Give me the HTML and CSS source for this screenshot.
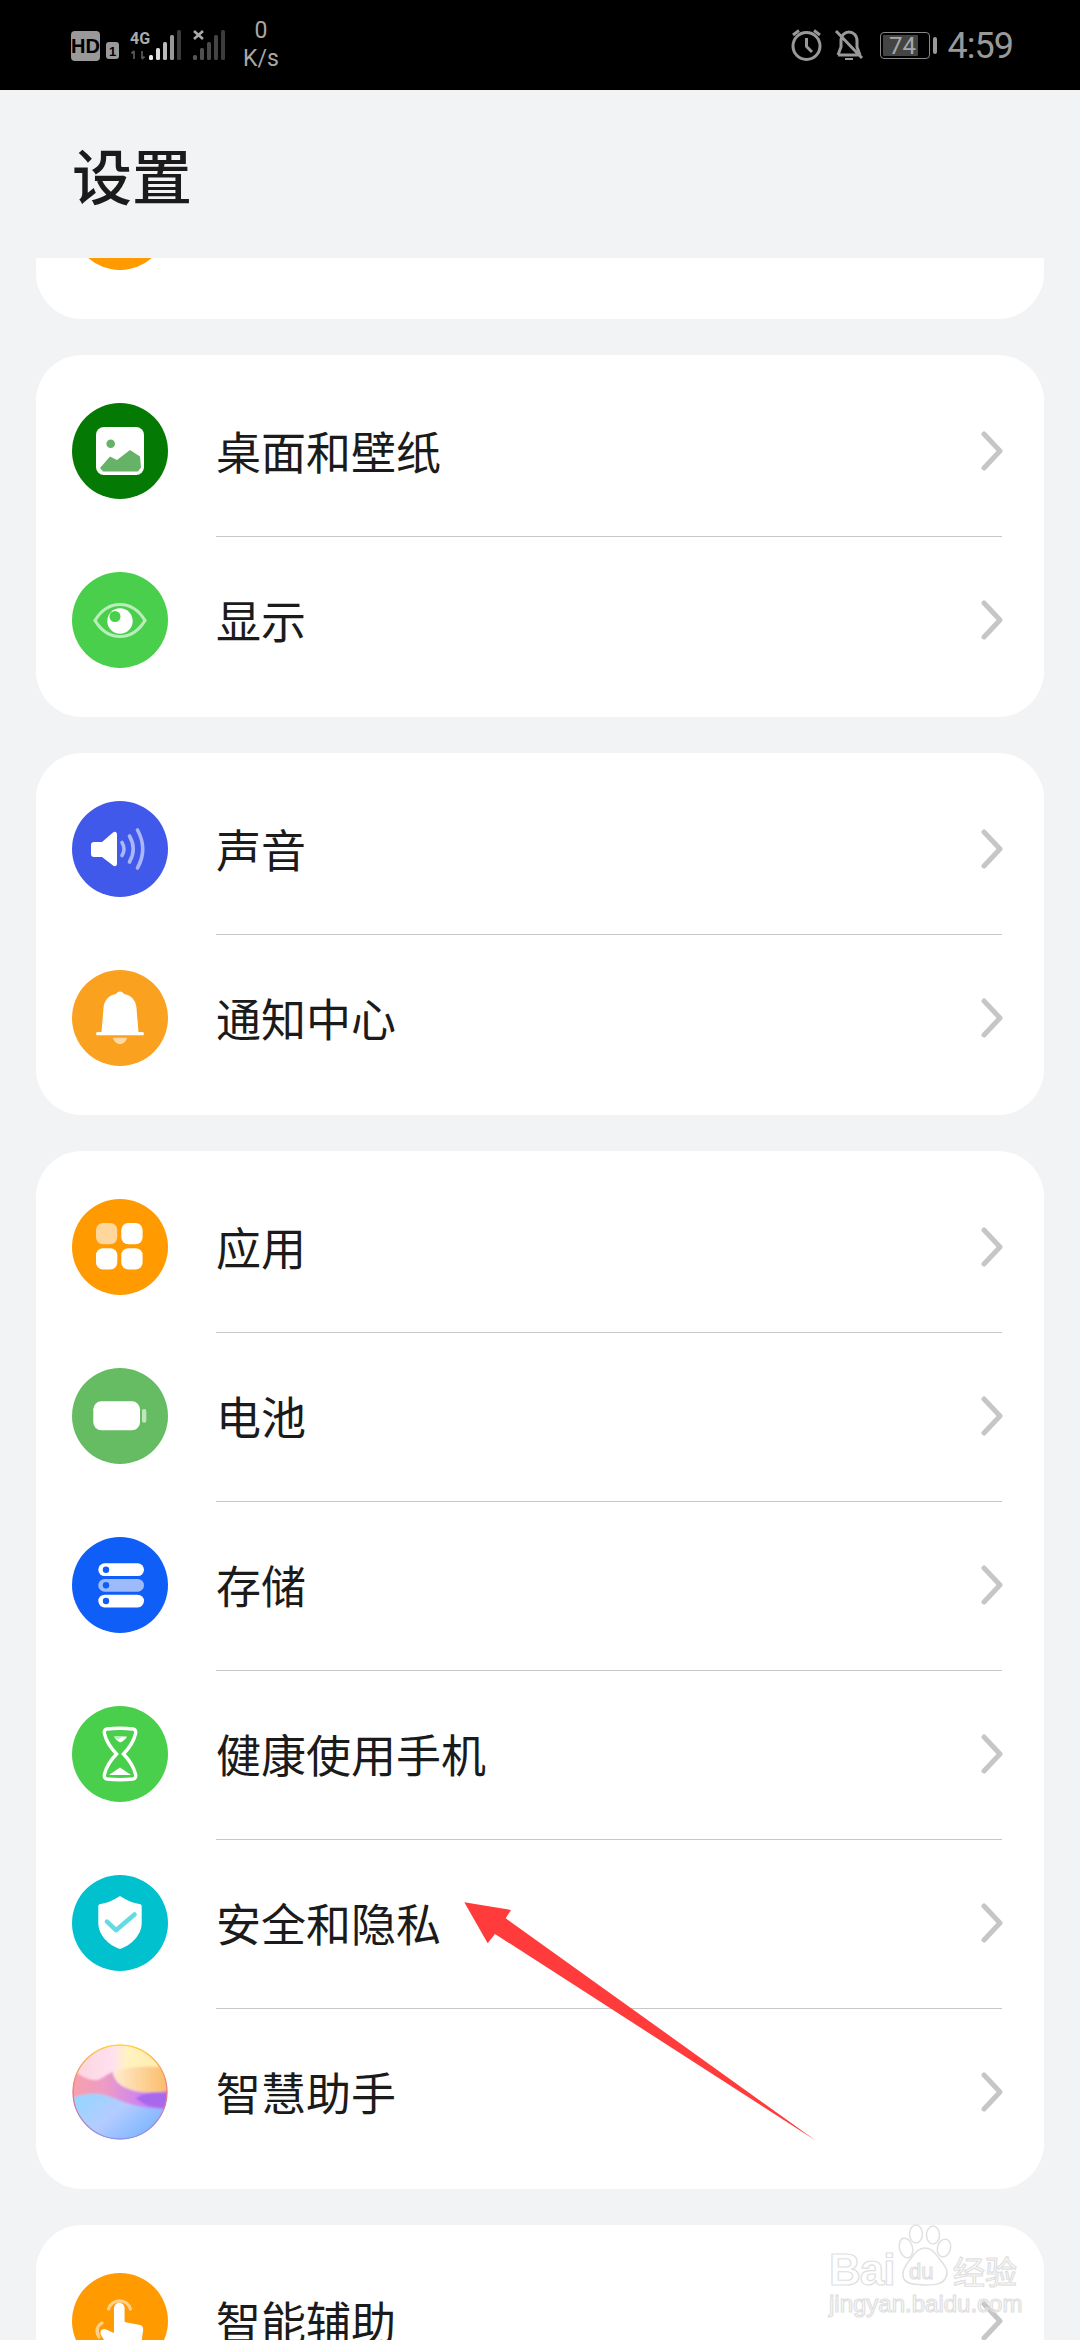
FILE: index.html
```html
<!DOCTYPE html>
<html lang="zh-CN">
<head>
<meta charset="utf-8">
<title>设置</title>
<link rel="stylesheet" href="styles.css">
</head>
<body>
<div class="page">
  <header class="status">
    <div class="status-left">
      <svg class="net" width="152" height="40" viewBox="71 26 152 40">
        <rect x="71" y="31" width="29" height="30" rx="4" fill="#999"/>
        <text x="85.5" y="53" class="st-hd">HD</text>
        <rect x="106" y="42" width="13" height="17" rx="3" fill="#999"/>
        <text x="112.5" y="56" class="st-one">1</text>
        <text x="140" y="44" class="st-4g">4G</text>
        <path d="M134 59v-8M131.5 53.5l2.5-2.5M142 51v8M144.5 56.5L142 59" stroke="#555" stroke-width="1.8" fill="none"/>
        <rect x="149" y="55" width="4" height="5" rx="1.5" fill="#eee"/>
        <rect x="156" y="48" width="4" height="12" rx="1.5" fill="#ddd"/>
        <rect x="163" y="42" width="4" height="18" rx="1.5" fill="#bbb"/>
        <rect x="170" y="35" width="4" height="25" rx="1.5" fill="#999"/>
        <rect x="177" y="30" width="4" height="30" rx="1.5" fill="#3c3c3c"/>
        <path d="M194 31l9 8M203 31l-9 8" stroke="#aaa" stroke-width="2.6"/>
        <rect x="193" y="55" width="4" height="5" rx="1.5" fill="#555"/>
        <rect x="200" y="48" width="4" height="12" rx="1.5" fill="#505050"/>
        <rect x="207" y="42" width="4" height="18" rx="1.5" fill="#4a4a4a"/>
        <rect x="214" y="35" width="4" height="25" rx="1.5" fill="#444"/>
        <rect x="221" y="30" width="4" height="30" rx="1.5" fill="#3c3c3c"/>
      </svg>
      <div class="speed"><span>0</span><span>K/s</span></div>
    </div>
    <div class="status-right">
      <svg class="alarm" width="32" height="34" viewBox="791 28 32 34" fill="none" stroke="#999" stroke-width="3">
        <circle cx="806.5" cy="46" r="13.5"/>
        <path d="M806.5 38v8.500l5.500 5.500M793 35l6-4.500M820 35l-6-4.500"/>
      </svg>
      <svg class="mute" width="30" height="34" viewBox="834 28 30 34" fill="none" stroke="#999" stroke-width="3">
        <path d="M838 55h22M841 41c0-6 4-9 8-9s8 3 8 9v6l3 8M841 41v6l-3 8M836 31l26 27"/>
        <path d="M845 59h8" stroke-width="2"/>
      </svg>
      <div class="battery"><span class="battery-fill"></span><span class="battery-num">74</span></div>
      <span class="battery-tab"></span>
      <span class="clock">4:59</span>
    </div>
  </header>

  <h1 class="title">设置</h1>

  <main class="scroller">
    <div class="list">
      <section class="card">
        <div class="row">
          <span class="icon c-orange"></span>
          <span class="label">更多连接</span>
          <svg class="chev" width="22" height="40" viewBox="0 0 22 40"><path d="M3 3l16 17L3 37"/></svg>
        </div>
      </section>

      <section class="card">
        <div class="row">
          <span class="icon c-darkgreen">
            <svg width="96" height="96" viewBox="0 0 96 96">
              <rect x="24" y="24" width="48" height="48" rx="8" fill="#fff"/>
              <circle cx="38.700" cy="40.700" r="4.300" fill="#66b266"/>
              <path d="M28 65l10-11.500 7 3.500 13-10 10 6.500 1 11-3 4H31z" fill="#66b266"/>
            </svg>
          </span>
          <span class="label">桌面和壁纸</span>
          <svg class="chev" width="22" height="40" viewBox="0 0 22 40"><path d="M3 3l16 17L3 37"/></svg>
        </div>
        <div class="row">
          <span class="icon c-green">
            <svg width="96" height="96" viewBox="0 0 96 96">
              <path d="M23 48.500C30 37 39 32.500 48 32.500S66 37 73 48.500C66 60 57 64.500 48 64.500S30 60 23 48.500z" fill="none" stroke="#b9edb9" stroke-width="3.200"/>
              <circle cx="48" cy="49" r="12.700" fill="#fff"/>
              <circle cx="43" cy="44.500" r="5.500" fill="#49cf4b"/>
            </svg>
          </span>
          <span class="label">显示</span>
          <svg class="chev" width="22" height="40" viewBox="0 0 22 40"><path d="M3 3l16 17L3 37"/></svg>
        </div>
      </section>

      <section class="card">
        <div class="row">
          <span class="icon c-indigo">
            <svg width="96" height="96" viewBox="0 0 96 96">
              <path d="M22 41h8l11-9.500c2-1.500 4-.5 4 2v29c0 2.500-2 3.500-4 2L30 56h-8c-2 0-3-1-3-3V44c0-2 1-3 3-3z" fill="#fff"/>
              <path d="M50 41.500q4 6.500 0 13M57.500 35q7.500 13 0 26M65.500 29q10.500 19 0 38" fill="none" stroke="#aab6f6" stroke-width="3.600" stroke-linecap="round"/>
            </svg>
          </span>
          <span class="label">声音</span>
          <svg class="chev" width="22" height="40" viewBox="0 0 22 40"><path d="M3 3l16 17L3 37"/></svg>
        </div>
        <div class="row">
          <span class="icon c-amber">
            <svg width="96" height="96" viewBox="0 0 96 96">
              <path d="M48 21.500c2 0 3 1 4 2.500 8 1.500 12 7 12.500 14L66.500 62h3.900c2 0 2 3.300 0 3.300H25.600c-2 0-2-3.300 0-3.300h3.900l2-24c.5-7 4.500-12.500 12.500-14 1-1.500 2-2.500 4-2.500z" fill="#fff"/>
              <path d="M41 67.700h14c-1 4-4 6.300-7 6.300s-6-2.300-7-6.300z" fill="#fdd9a5"/>
            </svg>
          </span>
          <span class="label">通知中心</span>
          <svg class="chev" width="22" height="40" viewBox="0 0 22 40"><path d="M3 3l16 17L3 37"/></svg>
        </div>
      </section>

      <section class="card">
        <div class="row">
          <span class="icon c-orange">
            <svg width="96" height="96" viewBox="0 0 96 96">
              <rect x="24" y="24" width="21.300" height="21.300" rx="7" fill="#ffd69c"/>
              <rect x="49.300" y="24" width="21.300" height="21.300" rx="7" fill="#fff"/>
              <rect x="24" y="49.300" width="21.300" height="21.300" rx="7" fill="#fff"/>
              <rect x="49.300" y="49.300" width="21.300" height="21.300" rx="7" fill="#fff"/>
            </svg>
          </span>
          <span class="label">应用</span>
          <svg class="chev" width="22" height="40" viewBox="0 0 22 40"><path d="M3 3l16 17L3 37"/></svg>
        </div>
        <div class="row">
          <span class="icon c-leaf">
            <svg width="96" height="96" viewBox="0 0 96 96">
              <rect x="21.300" y="33.300" width="46.700" height="29" rx="8" fill="#fff"/>
              <rect x="70" y="41" width="4.300" height="13.700" rx="2" fill="#c2e4c0"/>
            </svg>
          </span>
          <span class="label">电池</span>
          <svg class="chev" width="22" height="40" viewBox="0 0 22 40"><path d="M3 3l16 17L3 37"/></svg>
        </div>
        <div class="row">
          <span class="icon c-blue">
            <svg width="96" height="96" viewBox="0 0 96 96">
              <rect x="26.300" y="26.300" width="45.700" height="12.700" rx="6.300" fill="#fff"/>
              <rect x="26.300" y="42" width="45.700" height="12.700" rx="6.300" fill="#9dbafb"/>
              <rect x="26.300" y="57.700" width="45.700" height="12.700" rx="6.300" fill="#fff"/>
              <circle cx="34" cy="32.700" r="3.200" fill="#0f5ef7"/>
              <circle cx="34" cy="48.300" r="3.200" fill="#0f5ef7"/>
              <circle cx="34" cy="64" r="3.200" fill="#0f5ef7"/>
            </svg>
          </span>
          <span class="label">存储</span>
          <svg class="chev" width="22" height="40" viewBox="0 0 22 40"><path d="M3 3l16 17L3 37"/></svg>
        </div>
        <div class="row">
          <span class="icon c-green">
            <svg width="96" height="96" viewBox="0 0 96 96">
              <path d="M35 23Q48 21.500 61 23Q64.500 23.500 63.500 28Q61 38 51.500 48Q61 58 63.500 68Q64.500 72.500 61 73Q48 74.500 35 73Q31.500 72.500 32.500 68Q35 58 44.500 48Q35 38 32.500 28Q31.500 23.500 35 23z" fill="none" stroke="#fff" stroke-width="3.400"/>
              <path d="M42 30.500h13q-2 4-7 6q-4-2-6-6z" fill="#fff"/>
              <path d="M42 30.500h9l-5 3z" fill="#b9edb9"/>
              <path d="M48 61.500l11 7.500H37z" fill="#fff"/>
            </svg>
          </span>
          <span class="label">健康使用手机</span>
          <svg class="chev" width="22" height="40" viewBox="0 0 22 40"><path d="M3 3l16 17L3 37"/></svg>
        </div>
        <div class="row">
          <span class="icon c-teal">
            <svg width="96" height="96" viewBox="0 0 96 96">
              <path d="M48 21c6 4 13 7 19.500 8c1.500.3 2.200 1 2.200 2.500V48C69.700 60 59 70.500 48 74C37 70.500 26.300 60 26.300 48V31.500c0-1.500.7-2.200 2.200-2.500C35 28 42 25 48 21z" fill="#fff"/>
              <path d="M35 46.700l9 8.500 18.500-15.700" fill="none" stroke="#62dbe2" stroke-width="4.600" stroke-linecap="round" stroke-linejoin="round"/>
            </svg>
          </span>
          <span class="label">安全和隐私</span>
          <svg class="chev" width="22" height="40" viewBox="0 0 22 40"><path d="M3 3l16 17L3 37"/></svg>
        </div>
        <div class="row">
          <span class="icon">
            <svg width="96" height="96" viewBox="0 0 96 96">
              <defs>
                <clipPath id="orb"><circle cx="48" cy="48" r="47"/></clipPath>
                <filter id="soft" x="-10%" y="-10%" width="120%" height="120%"><feGaussianBlur stdDeviation="1.200"/></filter>
                <linearGradient id="orbTop" x1="0" y1="0" x2="1" y2="0">
                  <stop offset="0" stop-color="#fbd3dc"/><stop offset=".42" stop-color="#ffe0f0"/><stop offset=".58" stop-color="#fff3c0"/><stop offset="1" stop-color="#ffe9a8"/>
                </linearGradient>
                <linearGradient id="orbMid" x1="0" y1="0" x2="1" y2="0">
                  <stop offset="0" stop-color="#f8a0a8"/><stop offset=".35" stop-color="#ee9cc4"/><stop offset=".8" stop-color="#c47cff"/><stop offset="1" stop-color="#e46fa8"/>
                </linearGradient>
                <linearGradient id="orbLow" x1="0" y1="0" x2="1" y2=".6">
                  <stop offset="0" stop-color="#8fd8ff"/><stop offset=".5" stop-color="#b4ccff"/><stop offset="1" stop-color="#72b2ff"/>
                </linearGradient>
                <linearGradient id="orbSun" x1="0" y1="0" x2="1" y2="0">
                  <stop offset="0" stop-color="#ffeccf"/><stop offset="1" stop-color="#fbb860"/>
                </linearGradient>
                <linearGradient id="orbRim" x1="0" y1="0" x2="0" y2="1">
                  <stop offset="0" stop-color="#ffd23c"/><stop offset=".5" stop-color="#e8768c"/><stop offset="1" stop-color="#8f94e8"/>
                </linearGradient>
              </defs>
              <g clip-path="url(#orb)">
                <rect width="96" height="96" fill="url(#orbTop)"/>
                <g filter="url(#soft)">
                  <path d="M-4 22c12 10 20 15 29 14c6-1 9-6 16-8c0 0 1 12 14 16h45v56H-4z" fill="url(#orbMid)"/>
                  <path d="M41 30c8-6 20-9 59-6v22c-19 4-49 6-59-16z" fill="url(#orbSun)"/>
                  <path d="M64 54c10-6 22-7 36-4v14c-16 1-28-2-36-10z" fill="#a868ec"/>
                  <path d="M-4 56c16-8 31-8 46-2c12 5 24 11 58 11v35H-4z" fill="url(#orbLow)"/>
                </g>
              </g>
              <circle cx="48" cy="48" r="47" fill="none" stroke="url(#orbRim)" stroke-width="1.400"/>
            </svg>
          </span>
          <span class="label">智慧助手</span>
          <svg class="chev" width="22" height="40" viewBox="0 0 22 40"><path d="M3 3l16 17L3 37"/></svg>
        </div>
      </section>

      <section class="card">
        <div class="row">
          <span class="icon c-orange">
            <svg width="96" height="96" viewBox="0 0 96 96">
              <path d="M36.500 36a11.500 11.500 0 0 1 22 0" fill="none" stroke="#ffd08a" stroke-width="3.200" stroke-linecap="round"/>
              <path d="M27 64q-5-9 3-14" fill="none" stroke="#ffd08a" stroke-width="3.200" stroke-linecap="round"/>
              <path d="M42 35a5.300 5.300 0 0 1 10.600 0V49L68 52q4 1 3 6L68 80H40L29 62q-2-6 4-6l9 4z" fill="#fff"/>
            </svg>
          </span>
          <span class="label">智能辅助</span>
          <svg class="chev" width="22" height="40" viewBox="0 0 22 40"><path d="M3 3l16 17L3 37"/></svg>
        </div>
      </section>
    </div>
  </main>

  <svg class="arrow" width="360" height="245" viewBox="460 1900 360 245">
    <path d="M464.300 1902.300L511 1910L505.700 1918.300L816 2140.700L495 1934L487.700 1943.300z" fill="#ff3b3b"/>
  </svg>

  <svg class="watermark" width="204" height="100" viewBox="822 2222 204 100">
    <g fill="none" stroke="#e0e0e0" stroke-width="1.500">
      <ellipse cx="906" cy="2248" rx="6.500" ry="10" transform="rotate(-15 906 2248)"/>
      <ellipse cx="916" cy="2234" rx="6.500" ry="9"/>
      <ellipse cx="933" cy="2235" rx="6.500" ry="9"/>
      <ellipse cx="944" cy="2248" rx="6.500" ry="9" transform="rotate(15 944 2248)"/>
      <path d="M925 2248c8 0 11 7 16 13c6 7 8 12 4 18c-3 5-9 6-20 6s-18-1-21-6c-3-6 0-11 5-18c5-6 8-13 16-13z"/>
    </g>
    <text x="829" y="2285" class="wm wm-bai">Bai</text>
    <text x="909" y="2279" class="wm wm-du">du</text>
    <text x="953" y="2284" class="wm wm-jy">经验</text>
    <text x="829" y="2312" class="wm wm-url">jingyan.baidu.com</text>
  </svg>
</div>
</body>
</html>
```

FILE: styles.css
```css
* { box-sizing: border-box; }
html, body { margin: 0; padding: 0; }
body {
  width: 1080px;
  height: 2340px;
  overflow: hidden;
  background: #f1f3f5;
  font-family: "Noto Sans CJK SC", "Noto Sans", sans-serif;
}
.page {
  position: relative;
  width: 1080px;
  height: 2340px;
  display: flex;
  flex-direction: column;
  overflow: hidden;
}
.status {
  flex: none;
  height: 90px;
  background: #000;
  color: #999;
  display: flex;
  justify-content: space-between;
  align-items: flex-start;
  padding: 26px 67px 0 71px;
  font-family: Roboto, sans-serif;
}
.status-left { display: flex; align-items: flex-start; }
.status-right { display: flex; align-items: flex-start; }
.net { display: block; overflow: visible; }
.st-hd { font: 700 20px "Liberation Sans", sans-serif; fill: #000; text-anchor: middle; }
.st-one { font: 700 13px "Liberation Sans", sans-serif; fill: #000; text-anchor: middle; }
.st-4g { font: 700 16px Roboto, sans-serif; fill: #aaa; text-anchor: middle; }
.speed {
  display: flex;
  flex-direction: column;
  align-items: center;
  width: 34px;
  margin: -9px 0 0 21px;
  font-size: 23px;
  line-height: 28px;
  color: #a8a8a8;
}
.alarm { display: block; margin: 2px 0 0 0; }
.mute { display: block; margin: 2px 0 0 11px; }
.battery {
  position: relative;
  width: 50px;
  height: 27px;
  margin: 6px 0 0 16px;
  border: 1.500px solid #888;
  border-radius: 4px;
  display: flex;
  align-items: center;
  justify-content: center;
  overflow: hidden;
}
.battery-fill {
  position: absolute;
  left: 2px;
  top: 2px;
  bottom: 2px;
  width: 35px;
  background: #444;
  border-radius: 1px;
}
.battery-num {
  position: relative;
  font-size: 24px;
  line-height: 24px;
  color: #a8a8a8;
  margin-right: 4px;
}
.battery-tab {
  width: 4px;
  height: 17px;
  margin: 11px 0 0 3px;
  background: #999;
  border-radius: 2px;
}
.clock {
  margin: -1px 0 0 11px;
  font-size: 36px;
  line-height: 42px;
  color: #999;
  letter-spacing: -1px;
}
.title {
  flex: none;
  height: 168px;
  margin: 0;
  padding: 0 0 0 72px;
  font-size: 60px;
  font-weight: 500;
  line-height: 168px;
  color: #1b1b1b;
}
.scroller {
  flex: 1;
  min-height: 0;
  overflow: hidden;
}
.list {
  display: flex;
  flex-direction: column;
  gap: 36px;
  margin-top: -132px;
  padding: 0 36px;
}
.card {
  background: #fff;
  border-radius: 46px;
  padding: 12px 42px 12px 36px;
}
.row {
  position: relative;
  height: 169px;
  display: flex;
  align-items: center;
}
.row + .row::before {
  content: "";
  position: absolute;
  left: 144px;
  right: 0;
  top: 0;
  height: 1px;
  background: #c8c8c8;
}
.icon {
  flex: none;
  width: 96px;
  height: 96px;
  margin: 0 48px 1px 0;
  border-radius: 50%;
  display: block;
  overflow: hidden;
}
.icon svg { display: block; }
.c-orange { background: #ff9a00; }
.c-darkgreen { background: #047a04; }
.c-green { background: #49cf4b; }
.c-indigo { background: #4059eb; }
.c-amber { background: #faa21f; }
.c-leaf { background: #65bc62; }
.c-blue { background: #0f5ef7; }
.c-teal { background: #00c1cd; }
.label {
  flex: 1;
  margin-bottom: 1px;
  font-size: 45px;
  line-height: 60px;
  color: #1b1b1b;
}
.chev { flex: none; margin: 0 -1px 2px 0; }
.chev path {
  fill: none;
  stroke: #c6c6c6;
  stroke-width: 5;
  stroke-linecap: round;
  stroke-linejoin: round;
}
.arrow {
  position: absolute;
  left: 460px;
  top: 1900px;
}
.watermark {
  position: absolute;
  left: 822px;
  top: 2222px;
}
.wm {
  fill: none;
  stroke: #e0e0e0;
  stroke-width: 1.200;
  font-family: "Liberation Sans", sans-serif;
}
.wm-bai { font-size: 44px; font-weight: 700; letter-spacing: -1px; }
.wm-du { font-size: 22px; font-weight: 400; }
.wm-jy { font-size: 32px; font-family: "Noto Sans CJK SC", sans-serif; }
.wm-url { font-size: 24px; }
```
